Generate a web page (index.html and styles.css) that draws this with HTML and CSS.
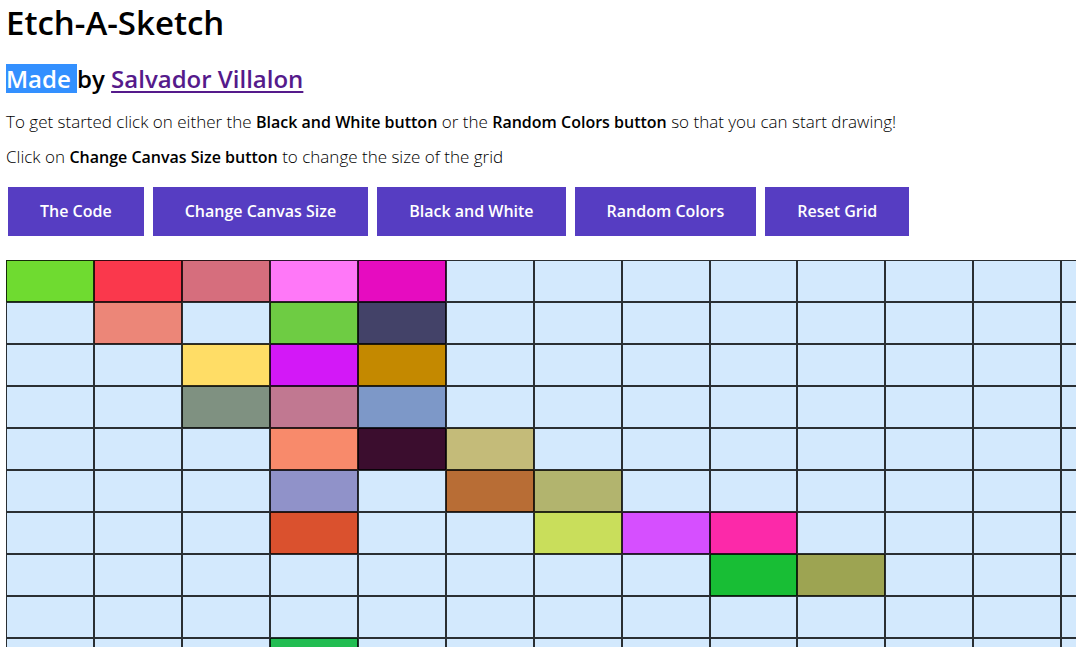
FILE: index.html
```html
<!DOCTYPE html>
<html lang="en">
<head>
<meta charset="utf-8">
<title>Etch-A-Sketch</title>
<link rel="stylesheet" href="styles.css">
</head>
<body>
<header class="intro">
<h1 class="title">Etch-A-Sketch</h1>
<h2 class="byline"><span class="selected">Made </span>by <a class="author" href="#author">Salvador Villalon</a></h2>
<p class="hint">To get started click on either the <strong>Black and White button</strong> or the <strong>Random Colors button</strong> so that you can start drawing!</p>
<p class="hint">Click on <strong>Change Canvas Size button</strong> to change the size of the grid</p>
</header>
<nav class="toolbar">
<button class="tool" type="button">The Code</button>
<button class="tool" type="button">Change Canvas Size</button>
<button class="tool" type="button">Black and White</button>
<button class="tool" type="button">Random Colors</button>
<button class="tool" type="button">Reset Grid</button>
</nav>
<main class="canvas" id="canvas"></main>
<script src="script.js"></script>
</body>
</html>
```

FILE: styles.css
```css
* {
  box-sizing: border-box;
}

body {
  margin: 0;
  padding: 0 6px;
  height: 100vh;
  overflow: hidden;
  background: #fff;
  color: #000;
  font-family: "Open Sans", "Noto Sans", sans-serif;
}

.title {
  margin: 0;
  padding-top: 2px;
  font-size: 33px;
  line-height: 42px;
  font-weight: 600;
}

.byline {
  margin: 20px 0 0;
  font-size: 24px;
  line-height: 29px;
  font-weight: 600;
}

.selected {
  display: inline-block;
  white-space: pre;
  background: #3390ff;
  color: #fff;
}

.author {
  color: #551a8b;
  text-decoration-thickness: 2px;
  text-underline-offset: 3px;
}

.hint {
  margin: 15px 0 0;
  font-size: 17px;
  line-height: 20px;
  font-weight: 300;
}

.hint:first-of-type {
  margin-top: 19px;
}

.hint strong {
  font-size: 16px;
  font-weight: 600;
}

.toolbar {
  display: flex;
  flex-wrap: wrap;
  gap: 9px;
  padding: 20px 2px 24px;
}

.tool {
  border: 0;
  padding: 14px 32px;
  background: #563dc2;
  color: #fff;
  font-family: inherit;
  font-size: 16px;
  line-height: 21px;
  font-weight: 600;
}

.canvas {
  display: grid;
  grid-template-columns: repeat(16, 1fr);
  grid-auto-rows: 42px;
  min-width: 1407px;
}

.cell {
  border: 1px solid rgba(0, 0, 0, 0.8);
  background-color: #d3e9fd;
}
```

FILE: script.js
```js
const COLUMNS = 16;
const ROWS = 16;

const painted = [
  { 0: '#6fdb30', 1: '#fa384c', 2: '#d66e7d', 3: '#ff78f8', 4: '#e60cc0' },
  { 1: '#ec8678', 3: '#6ecc43', 4: '#434268' },
  { 2: '#ffdd66', 3: '#d318f7', 4: '#c48900' },
  { 2: '#7f9181', 3: '#c17891', 4: '#7d98c8' },
  { 3: '#f88a6b', 4: '#3b0d2e', 5: '#c4bb79' },
  { 3: '#9092c9', 5: '#b86d35', 6: '#b2b46e' },
  { 3: '#da512e', 6: '#c9de5b', 7: '#d64fff', 8: '#fc29a9' },
  { 8: '#18be35', 9: '#9da452' },
  {},
  { 3: '#22bd52' }
];

const canvas = document.getElementById('canvas');

for (let row = 0; row < ROWS; row++) {
  for (let column = 0; column < COLUMNS; column++) {
    const cell = document.createElement('div');
    const color = (painted[row] || {})[column];
    cell.className = 'cell';
    if (color) cell.style.backgroundColor = color;
    canvas.appendChild(cell);
  }
}
```
